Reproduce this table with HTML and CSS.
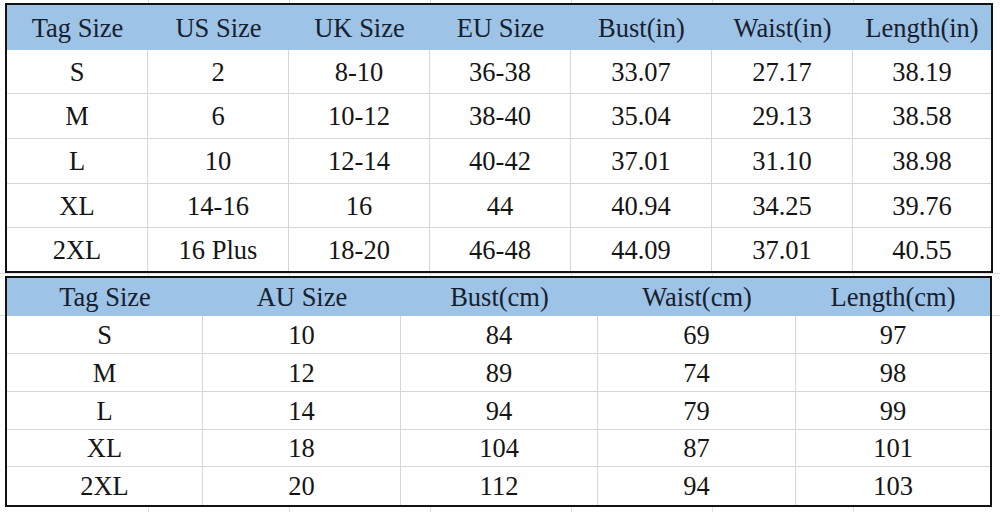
FILE: index.html
```html
<!DOCTYPE html>
<html>
<head>
<meta charset="utf-8">
<link rel="stylesheet" href="styles.css">
</head>
<body>
<div class="sheet">
  <div class="tbl tbl-in">
    <div class="c h">Tag Size</div><div class="c h">US Size</div><div class="c h">UK Size</div><div class="c h">EU Size</div><div class="c h">Bust(in)</div><div class="c h">Waist(in)</div><div class="c h">Length(in)</div>
    <div class="c">S</div><div class="c">2</div><div class="c">8-10</div><div class="c">36-38</div><div class="c">33.07</div><div class="c">27.17</div><div class="c">38.19</div>
    <div class="c">M</div><div class="c">6</div><div class="c">10-12</div><div class="c">38-40</div><div class="c">35.04</div><div class="c">29.13</div><div class="c">38.58</div>
    <div class="c">L</div><div class="c">10</div><div class="c">12-14</div><div class="c">40-42</div><div class="c">37.01</div><div class="c">31.10</div><div class="c">38.98</div>
    <div class="c">XL</div><div class="c">14-16</div><div class="c">16</div><div class="c">44</div><div class="c">40.94</div><div class="c">34.25</div><div class="c">39.76</div>
    <div class="c l">2XL</div><div class="c l">16 Plus</div><div class="c l">18-20</div><div class="c l">46-48</div><div class="c l">44.09</div><div class="c l">37.01</div><div class="c l">40.55</div>
  </div>
  <div class="tbl tbl-cm">
    <div class="c h">Tag Size</div><div class="c h">AU Size</div><div class="c h">Bust(cm)</div><div class="c h">Waist(cm)</div><div class="c h">Length(cm)</div>
    <div class="c">S</div><div class="c">10</div><div class="c">84</div><div class="c">69</div><div class="c">97</div>
    <div class="c">M</div><div class="c">12</div><div class="c">89</div><div class="c">74</div><div class="c">98</div>
    <div class="c">L</div><div class="c">14</div><div class="c">94</div><div class="c">79</div><div class="c">99</div>
    <div class="c">XL</div><div class="c">18</div><div class="c">104</div><div class="c">87</div><div class="c">101</div>
    <div class="c l">2XL</div><div class="c l">20</div><div class="c l">112</div><div class="c l">94</div><div class="c l">103</div>
  </div>
</div>
</body>
</html>
```
FILE: styles.css
```css
html, body {
  margin: 0;
  padding: 0;
}
body {
  width: 1000px;
  height: 512px;
  overflow: hidden;
  background-color: #ffffff;
  background-image:
    linear-gradient(to right, transparent 148px, #dedede 148px, #dedede 149px, transparent 149px),
    linear-gradient(to right, transparent 289px, #dedede 289px, #dedede 290px, transparent 290px),
    linear-gradient(to right, transparent 430px, #dedede 430px, #dedede 431px, transparent 431px),
    linear-gradient(to right, transparent 571px, #dedede 571px, #dedede 572px, transparent 572px),
    linear-gradient(to right, transparent 712px, #dedede 712px, #dedede 713px, transparent 713px),
    linear-gradient(to right, transparent 853px, #dedede 853px, #dedede 854px, transparent 854px),
    linear-gradient(to bottom, transparent 273px, #dedede 273px, #dedede 274px, transparent 274px),
    linear-gradient(to bottom, transparent 315px, #dedede 315px, #dedede 316px, transparent 316px);
  font-family: "Liberation Serif", "Times New Roman", serif;
}
.sheet {
  padding: 3px 0 0 5px;
  display: flex;
  flex-direction: column;
  gap: 3px;
}
.tbl {
  display: grid;
  box-sizing: border-box;
  border: 2px solid #121212;
  background: #ffffff;
}
.tbl-in {
  width: 988px;
  grid-template-columns: 141px 141px 141px 141px 141px 141px 138px;
  grid-template-rows: 45px 44px 45px 45px 44px 43px;
}
.tbl-cm {
  width: 987px;
  grid-template-columns: 196px 198px 197px 198px 194px;
  grid-template-rows: 38px 38px 38px 38px 37px 38px;
}
.c {
  display: flex;
  align-items: center;
  justify-content: center;
  box-sizing: border-box;
  border-right: 1px solid #d6d6d6;
  border-bottom: 1px solid #d6d6d6;
  font-size: 26.5px;
  padding-top: 1px;
  color: #151515;
  white-space: nowrap;
}
.tbl-in .c:nth-child(7n),
.tbl-cm .c:nth-child(5n) {
  border-right: none;
}
.c.l {
  border-bottom: none;
}
.c.h {
  background: #9dc3e6;
  border-right: none;
  border-bottom: none;
  color: #17202e;
}
```
